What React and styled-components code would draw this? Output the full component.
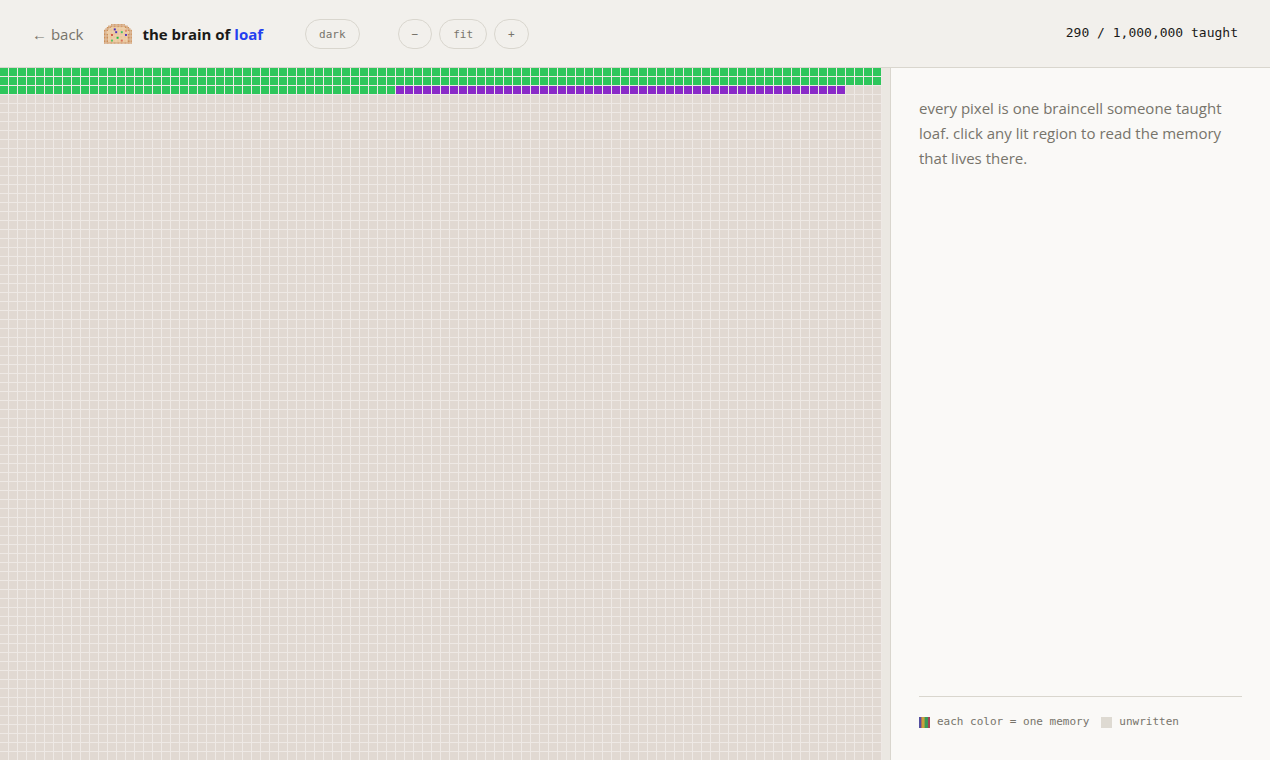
import React, { useEffect, useRef } from 'react';
import styled, { createGlobalStyle } from 'styled-components';

const colors = {
  bg: '#f2f0ec',
  panel: '#faf9f7',
  field: '#ebe8e2',
  line: '#d9d6ce',
  ink: '#1a1a18',
  muted: '#77746b',
  accent: '#2440f0',
  unwritten: '#e1d9d2',
  gridLine: '#eee9e5',
};

const sans = `'Open Sans', 'Noto Sans', sans-serif`;
const mono = `'DejaVu Sans Mono', 'Liberation Mono', monospace`;

const CELL = 9;
const TOTAL = 1000000;

const memories = [
  { color: '#2dc65b', cells: 240 },
  { color: '#8a2ac8', cells: 50 },
];

const taught = memories.reduce((sum, memory) => sum + memory.cells, 0);

const GlobalStyle = createGlobalStyle`
  * {
    box-sizing: border-box;
  }

  body {
    margin: 0;
    background: ${colors.bg};
    color: ${colors.ink};
    font-family: ${sans};
  }
`;

const Page = styled.div`
  display: flex;
  flex-direction: column;
  height: 100vh;
`;

const Header = styled.header`
  display: flex;
  align-items: center;
  gap: 21px;
  padding: 19px 32px 18px;
  border-bottom: 1px solid ${colors.line};
`;

const BackLink = styled.a`
  color: ${colors.muted};
  font-size: 15px;
  line-height: 20px;
  text-decoration: none;
`;

const Brand = styled.h1`
  display: flex;
  align-items: center;
  gap: 10px;
  margin: 0 21px 0 0;
  font-size: 15px;
  font-weight: 700;
  line-height: 20px;

  & span {
    color: ${colors.accent};
  }
`;

const Zoom = styled.div`
  display: flex;
  gap: 7px;
  margin-left: 17px;
`;

const Pill = styled.button`
  height: 30px;
  padding: 0 13px;
  border: 1px solid ${colors.line};
  border-radius: 15px;
  background: transparent;
  color: ${colors.muted};
  font-family: ${mono};
  font-size: 11px;
  cursor: pointer;
`;

const Count = styled.div`
  margin-left: auto;
  padding-bottom: 2px;
  font-family: ${mono};
  font-size: 13px;
  line-height: 18px;
`;

const Main = styled.main`
  display: flex;
  flex: 1;
  min-height: 0;
`;

const Field = styled.div`
  flex: 1;
  min-width: 0;
  overflow: hidden;
  background: ${colors.field};

  & canvas {
    display: block;
  }
`;

const Sidebar = styled.aside`
  display: flex;
  flex-direction: column;
  justify-content: space-between;
  flex: 0 0 380px;
  padding: 28px;
  border-left: 1px solid ${colors.line};
  background: ${colors.panel};
`;

const Intro = styled.p`
  margin: 0;
  color: ${colors.muted};
  font-size: 15px;
  line-height: 25px;
`;

const Legend = styled.div`
  display: flex;
  flex-wrap: wrap;
  gap: 12px;
  padding-top: 15px;
  border-top: 1px solid ${colors.line};
  color: ${colors.muted};
  font-family: ${mono};
  font-size: 11px;
  line-height: 20px;
`;

const LegendItem = styled.span`
  display: flex;
  align-items: center;
  gap: 7px;
`;

const Swatch = styled.i`
  width: 11px;
  height: 11px;
  background: ${props => props.$fill};
`;

const rainbow =
  'linear-gradient(90deg, #5550a0 0 2px, #b0705a 2px 3px, #c9a23c 3px 5px, #8fa048 5px 6px, #3c9a58 6px 9px, #a04558 9px)';

// o crust, comma crumb
const loafRows = [
  '.....oooooooooo.....',
  '...oooooooooooooo...',
  '..ooo,,,,,,,,,,ooo..',
  '.ooo,,,,,,,,,,,,ooo.',
  'ooo,,,,,,,,,,,,,,ooo',
  'oo,,,,,,,,,,,,,,,,oo',
  'oo,,,,,,,,,,,,,,,,oo',
  'ooo,,,,,,,,,,,,,,ooo',
  'ooo,,,,,,,,,,,,,,ooo',
  'ooo,,,,,,,,,,,,,,ooo',
  'ooo,,,,,,,,,,,,,,ooo',
  'ooo,,,,,,,,,,,,,,ooo',
  'ooo,,,,,,,,,,,,,,ooo',
  'oooooooooooooooooooo',
];

const loafColors = {
  o: '#cc8f58',
  ',': '#ebc79c',
};

const litCells = [
  { x: 7, y: 3, color: '#4a30b8' },
  { x: 8, y: 5, color: '#4a30b8' },
  { x: 15, y: 7, color: '#5a38b8' },
  { x: 12, y: 5, color: '#48c060' },
  { x: 9, y: 9, color: '#18c040' },
  { x: 5, y: 11, color: '#58c060' },
  { x: 5, y: 7, color: '#cf5848' },
  { x: 12, y: 11, color: '#d87058' },
  { x: 15, y: 4, color: '#e09070' },
];

function Loaf() {
  return (
    <svg width="28" height="20" viewBox="0 0 20 14" aria-hidden="true">
      {loafRows.map((row, y) =>
        row
          .split('')
          .map((key, x) =>
            loafColors[key] ? (
              <rect
                key={`${x}-${y}`}
                x={x}
                y={y}
                width={key === 'o' ? 0.9 : 1.1}
                height={key === 'o' ? 0.9 : 1.1}
                fill={loafColors[key]}
              />
            ) : null
          )
      )}
      {litCells.map(({ x, y, color }) => (
        <rect
          key={`lit-${x}-${y}`}
          x={x}
          y={y}
          width="1.4"
          height="1.4"
          fill={color}
        />
      ))}
    </svg>
  );
}

function BrainMap() {
  const fieldRef = useRef(null);
  const canvasRef = useRef(null);

  useEffect(() => {
    const field = fieldRef.current;
    const canvas = canvasRef.current;

    const draw = () => {
      const cols = Math.floor(field.clientWidth / CELL);
      const rows = Math.ceil(field.clientHeight / CELL);
      canvas.width = cols * CELL;
      canvas.height = rows * CELL;

      const ctx = canvas.getContext('2d');
      ctx.fillStyle = colors.gridLine;
      ctx.fillRect(0, 0, canvas.width, canvas.height);

      const lit = memories.flatMap(({ color, cells }) =>
        Array(cells).fill(color)
      );
      for (let i = 0; i < cols * rows; i++) {
        ctx.fillStyle = lit[i] || colors.unwritten;
        ctx.fillRect(
          (i % cols) * CELL,
          Math.floor(i / cols) * CELL,
          CELL - 1,
          CELL - 1
        );
      }
    };

    draw();
    const observer = new ResizeObserver(draw);
    observer.observe(field);
    return () => observer.disconnect();
  }, []);

  return (
    <Field ref={fieldRef}>
      <canvas ref={canvasRef} />
    </Field>
  );
}

function App() {
  return (
    <Page>
      <GlobalStyle />
      <Header>
        <BackLink href="#">← back</BackLink>
        <Brand>
          <Loaf />
          <div>
            the brain of <span>loaf</span>
          </div>
        </Brand>
        <Pill type="button">dark</Pill>
        <Zoom>
          <Pill type="button">−</Pill>
          <Pill type="button">fit</Pill>
          <Pill type="button">+</Pill>
        </Zoom>
        <Count>
          {taught} / {TOTAL.toLocaleString('en-US')} taught
        </Count>
      </Header>
      <Main>
        <BrainMap />
        <Sidebar>
          <Intro>
            every pixel is one braincell someone taught loaf. click any lit
            region to read the memory that lives there.
          </Intro>
          <Legend>
            <LegendItem>
              <Swatch $fill={rainbow} />
              each color = one memory
            </LegendItem>
            <LegendItem>
              <Swatch $fill="#dedad2" />
              unwritten
            </LegendItem>
          </Legend>
        </Sidebar>
      </Main>
    </Page>
  );
}

export default App;
